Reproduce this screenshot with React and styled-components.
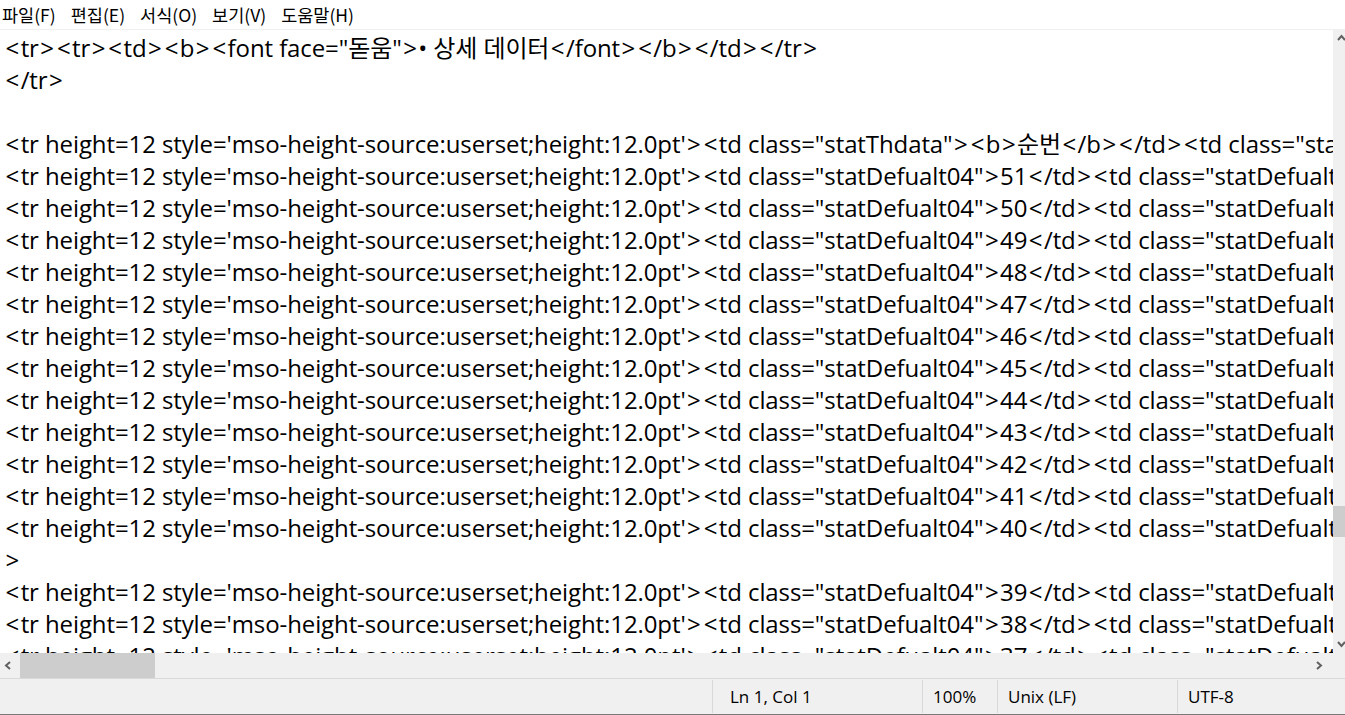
import styled, { createGlobalStyle } from "styled-components";

const GlobalStyle = createGlobalStyle`
  html, body {
    margin: 0;
    padding: 0;
    overflow: hidden;
    background: #ffffff;
  }
`;

const Window = styled.div`
  width: 1345px;
  height: 715px;
  display: flex;
  flex-direction: column;
  background: #ffffff;
  font-family: "Open Sans", "Noto Sans CJK KR", sans-serif;
  color: #000000;
`;

const MenuBar = styled.div`
  height: 29px;
  display: flex;
  align-items: center;
  gap: 15px;
  padding-left: 2px;
  border-bottom: 1px solid #f0f0f0;
  font-family: "Noto Sans CJK KR", sans-serif;
  font-size: 17.5px;
`;

const MenuItem = styled.span`
  white-space: nowrap;
`;

const Body = styled.div`
  flex: 1;
  display: flex;
  min-height: 0;
`;

const Editor = styled.div`
  flex: 1;
  overflow: hidden;
  padding: 2px 0 0 4px;
  font-size: 24px;
  letter-spacing: -0.1px;
`;

const Line = styled.div`
  height: 32px;
  line-height: 32px;
  white-space: pre;
`;

// angle brackets sit wider in the editor font
const Bracket = styled.span`
  margin: 0 1.5px;
`;

const VScroll = styled.div`
  width: 12px;
  overflow: hidden;
  background: #f0f0f0;
`;

const VTrack = styled.div`
  width: 17px;
  height: 100%;
  display: flex;
  flex-direction: column;
`;

const ArrowBox = styled.div`
  width: 17px;
  height: ${(p) => p.$h || 17}px;
  display: flex;
  align-items: center;
  justify-content: center;
  flex-shrink: 0;
`;

const Thumb = styled.div`
  background: #cdcdcd;
  flex-shrink: 0;
`;

const VThumb = styled(Thumb)`
  width: 17px;
  height: 31px;
  margin-top: ${(p) => p.$offset}px;
`;

const Spacer = styled.div`
  flex: 1;
`;

const HScroll = styled.div`
  height: 25px;
  display: flex;
  align-items: stretch;
  background: #f0f0f0;
`;

const HThumb = styled(Thumb)`
  width: 135px;
  margin-left: 3px;
`;

const StatusBar = styled.div`
  height: 35px;
  display: flex;
  align-items: stretch;
  background: #f0f0f0;
  border-top: 1px solid #dadada;
  border-bottom: 1px solid #7a7a7a;
  font-family: "Open Sans", sans-serif;
  font-size: 17px;
  padding-left: 712px;
`;

const Cell = styled.div`
  width: ${(p) => p.$w}px;
  display: flex;
  align-items: center;
  padding-left: ${(p) => p.$pad || 10}px;
  border-left: 1px solid #d9d9d9;
  margin: 1px 0;
  box-sizing: border-box;
  white-space: nowrap;
`;

function Chevron({ dir }) {
  const pts = {
    up: "1,6 4.5,2 8,6",
    down: "1,2 4.5,6 8,2",
    left: "6,1 2,4.5 6,8",
    right: "2,1 6,4.5 2,8",
  }[dir];
  return (
    <svg width="9" height="9" viewBox="0 0 9 9">
      <polyline points={pts} fill="none" stroke="#606060" strokeWidth="2" />
    </svg>
  );
}

function CodeLine({ text }) {
  const parts = text.split(/([<>])/);
  return (
    <Line>
      {parts.map((p, i) =>
        p === "<" || p === ">" ? <Bracket key={i}>{p}</Bracket> : p
      )}
    </Line>
  );
}

const rowPrefix =
  "<tr height=12 style='mso-height-source:userset;height:12.0pt'><td class=";
const rowTail = '</td><td class="statDefualt02"><td class="statDefualt02">';

const lines = [
  '<tr><tr><td><b><font face="돋움">• 상세 데이터</font></b></td></tr>',
  "</tr>",
  "",
  rowPrefix + '"statThdata"><b>순번</b></td><td class="statThdata"><b>',
  ...[51, 50, 49, 48, 47, 46, 45, 44, 43, 42, 41, 40].map(
    (n) => rowPrefix + '"statDefualt04">' + n + rowTail
  ),
  ">",
  ...[39, 38, 37].map((n) => rowPrefix + '"statDefualt04">' + n + rowTail),
];

export default function App() {
  return (
    <Window>
      <GlobalStyle />
      <MenuBar>
        {["파일(F)", "편집(E)", "서식(O)", "보기(V)", "도움말(H)"].map((m) => (
          <MenuItem key={m}>{m}</MenuItem>
        ))}
      </MenuBar>
      <Body>
        <Editor>
          {lines.map((l, i) => (
            <CodeLine key={i} text={l} />
          ))}
        </Editor>
        <VScroll>
          <VTrack>
            <ArrowBox>
              <Chevron dir="up" />
            </ArrowBox>
            <VThumb $offset={459} />
            <Spacer />
            <ArrowBox>
              <Chevron dir="down" />
            </ArrowBox>
          </VTrack>
        </VScroll>
      </Body>
      <HScroll>
        <ArrowBox $h={25}>
          <Chevron dir="left" />
        </ArrowBox>
        <HThumb />
        <Spacer />
        <ArrowBox $h={25}>
          <Chevron dir="right" />
        </ArrowBox>
        <ArrowBox $h={25} />
      </HScroll>
      <StatusBar>
        <Cell $w={210} $pad={17}>Ln 1, Col 1</Cell>
        <Cell $w={75}>100%</Cell>
        <Cell $w={180}>Unix (LF)</Cell>
        <Cell $w={168}>UTF-8</Cell>
      </StatusBar>
    </Window>
  );
}
